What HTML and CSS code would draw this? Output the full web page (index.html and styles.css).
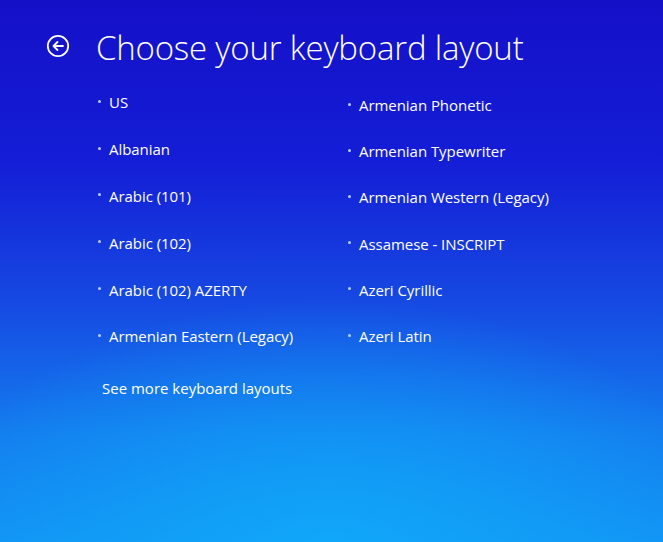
FILE: index.html
```html
<!DOCTYPE html>
<html>
<head>
<meta charset="utf-8">
<link rel="stylesheet" href="styles.css">
</head>
<body>
<div class="screen">
  <header class="head">
    <svg class="back" width="24" height="24" viewBox="0 0 24 24">
      <circle cx="12" cy="12" r="10.2" fill="none" stroke="#fff" stroke-width="1.8"/>
      <path d="M17 12H7.5M11.5 8L7.5 12L11.5 16" fill="none" stroke="#fff" stroke-width="1.8" stroke-linecap="round" stroke-linejoin="round"/>
    </svg>
    <h1 class="title">Choose your keyboard layout</h1>
  </header>
  <div class="lists">
    <ul class="col col-left">
      <li>US</li>
      <li>Albanian</li>
      <li>Arabic (101)</li>
      <li>Arabic (102)</li>
      <li>Arabic (102) AZERTY</li>
      <li>Armenian Eastern (Legacy)</li>
    </ul>
    <ul class="col col-right">
      <li>Armenian Phonetic</li>
      <li>Armenian Typewriter</li>
      <li>Armenian Western (Legacy)</li>
      <li>Assamese - INSCRIPT</li>
      <li>Azeri Cyrillic</li>
      <li>Azeri Latin</li>
    </ul>
  </div>
  <div class="more">See more keyboard layouts</div>
</div>
</body>
</html>
```
FILE: styles.css
```css
html, body {
  margin: 0;
  padding: 0;
}
body {
  width: 663px;
  height: 542px;
  overflow: hidden;
  font-family: "Open Sans", "Noto Sans", sans-serif;
  color: #fff;
}
.screen {
  width: 663px;
  height: 542px;
  box-sizing: border-box;
  padding: 26px 0 0 0;
  background:
    radial-gradient(ellipse 420px 260px at 330px 560px, rgba(16,170,250,0.9), rgba(16,170,250,0) 100%),
    linear-gradient(180deg, #1410c8 0%, #141ed6 30%, #1648e2 55%, #147cee 80%, #1292f4 100%);
}
.head {
  display: flex;
  align-items: center;
  padding-left: 46px;
  gap: 26px;
}
.back {
  flex: none;
  margin-top: -4px;
}
.title {
  margin: 0;
  font-weight: 300;
  font-size: 33px;
  line-height: 44px;
  letter-spacing: -0.2px;
}
.lists {
  display: flex;
  padding-left: 98px;
  margin-top: 9px;
}
.col {
  list-style: none;
  margin: 0;
  padding: 0;
  display: flex;
  flex-direction: column;
}
.col-left {
  width: 250px;
}
.col-left li {
  height: 46.8px;
}
.col-right {
  margin-top: 3px;
}
.col-right li {
  height: 46.2px;
}
.col li {
  font-size: 15px;
  display: flex;
  align-items: center;
  gap: 8px;
  letter-spacing: -0.05px;
}
.col li::before {
  content: "";
  width: 3px;
  height: 3px;
  border-radius: 50%;
  background: #b8ccff;
  flex: none;
  margin-top: -2px;
}
.more {
  padding-left: 102px;
  margin-top: 18px;
  font-size: 15px;
  letter-spacing: 0;
}
```
